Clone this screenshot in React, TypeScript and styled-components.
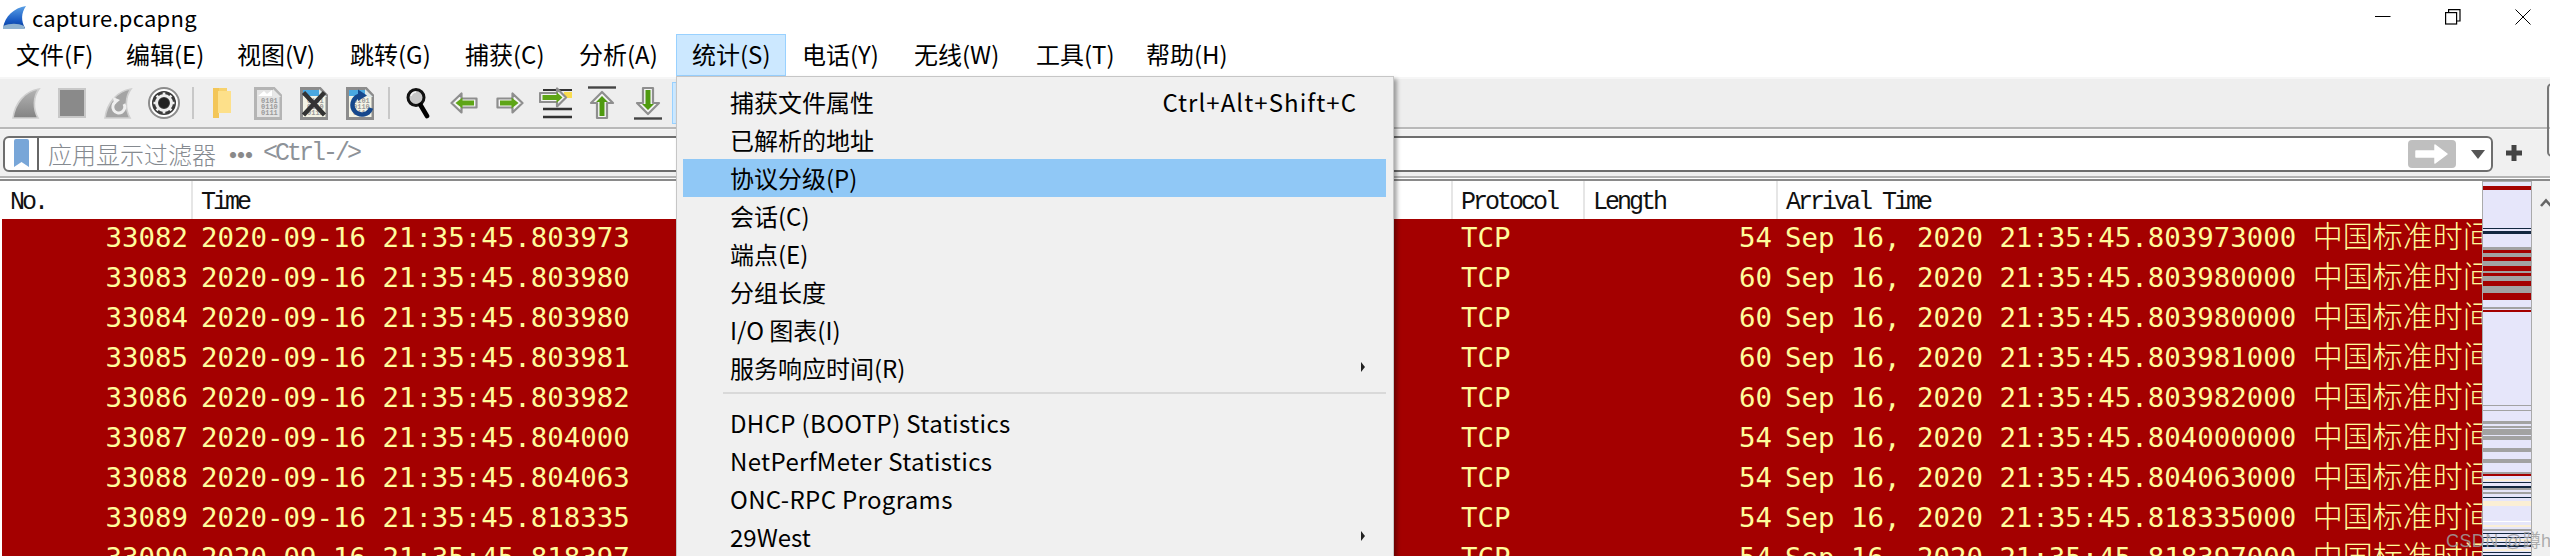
import React from "react";
import styled, { createGlobalStyle } from "styled-components";

const Global = createGlobalStyle`
  html, body { margin: 0; padding: 0; background: #fff; overflow: hidden; }
  #root { width: 2550px; height: 556px; }
`;

const UI = `"Noto Sans CJK SC", "Noto Sans", sans-serif`;

const Window = styled.div`
  position: relative;
  width: 2550px;
  height: 556px;
  overflow: hidden;
  display: flex;
  flex-direction: column;
  font-family: ${UI};
  color: #000;
`;

const TitleBar = styled.div`
  height: 34px;
  flex: none;
  display: flex;
  align-items: center;
  padding: 0 19px 0 2px;
  background: #fff;
`;
const TitleText = styled.span`
  margin-left: 5px;
  font-size: 22px;
  line-height: 34px;
  letter-spacing: 0.25px;
`;
const WindowControls = styled.div`
  margin-left: auto;
  display: flex;
  align-items: center;
  gap: 54px;
`;

const MenuBar = styled.div`
  height: 43px;
  flex: none;
  display: flex;
  background: #fff;
`;
const MenuTitle = styled.div<{ $active?: boolean; $w: number }>`
  width: ${(p) => p.$w}px;
  height: 42px;
  flex: none;
  box-sizing: border-box;
  padding: 0 0 4px 15px;
  display: flex;
  align-items: center;
  font-size: 24px;
  white-space: nowrap;
  border: 1px solid ${(p) => (p.$active ? "#99d1ff" : "transparent")};
  background: ${(p) => (p.$active ? "#cce8ff" : "transparent")};
`;

const Toolbar = styled.div`
  height: 48px;
  flex: none;
  display: flex;
  align-items: center;
  padding-left: 3px;
  background: #eeeeee;
  border-top: 2px solid #f6f6f6;
  border-bottom: 2px solid #b9b9b9;
`;
const ToolSlot = styled.div`
  width: 46px;
  height: 42px;
  display: flex;
  align-items: center;
  justify-content: center;
  flex: none;
`;
const ToolSep = styled.div`
  width: 2px;
  height: 32px;
  margin: 0 5px;
  flex: none;
  background: #c8c8c8;
`;
const HoverTool = styled.div`
  width: 46px;
  height: 42px;
  flex: none;
  box-sizing: border-box;
  margin-left: 1px;
  background: #cce8ff;
  border: 1px solid #99d1ff;
`;
const RightEdgeFrame = styled.div`
  position: absolute;
  left: 2547px;
  top: 83px;
  width: 10px;
  height: 74px;
  box-sizing: border-box;
  border: 2px solid #777;
  border-radius: 6px;
`;

const FilterBar = styled.div`
  height: 46px;
  flex: none;
  display: flex;
  align-items: center;
  padding: 0 0 0 3px;
  background: #f0f0f0;
  border-top: 1px solid #f6f6f6;
  border-bottom: 2px solid #b4b4b4;
`;
const FilterInput = styled.div`
  width: 2490px;
  height: 36px;
  flex: none;
  box-sizing: border-box;
  margin-top: 1px;
  display: flex;
  align-items: center;
  background: #fff;
  border: 2px solid #6e6e6e;
  border-radius: 6px;
  padding-left: 8px;
`;
const BookmarkDivider = styled.div`
  width: 2px;
  height: 32px;
  margin-left: 7px;
  flex: none;
  background: #666;
`;
const Placeholder = styled.span`
  margin-left: 9px;
  font-size: 24px;
  font-weight: 300;
  color: #858a90;
  white-space: nowrap;
  display: flex;
  align-items: center;
`;
const PlaceholderDots = styled.span`
  margin-left: 5px;
  font-size: 24px;
  font-weight: 700;
  letter-spacing: -16px;
  color: #8a8a8a;
`;
const PlaceholderHint = styled.span`
  margin-left: 18px;
  font-family: "Liberation Mono", monospace;
  font-size: 25px;
  letter-spacing: -3px;
  color: #8d9298;
`;
const ApplyButton = styled.div`
  margin-left: auto;
  width: 48px;
  height: 28px;
  flex: none;
  display: flex;
  align-items: center;
  justify-content: center;
  background: #bfbfbf;
  border-radius: 4px;
`;
const DropArrow = styled.div`
  width: 0;
  height: 0;
  flex: none;
  margin: 2px 6px 0 15px;
  border-left: 7px solid transparent;
  border-right: 7px solid transparent;
  border-top: 9px solid #555;
`;
const PlusButton = styled.div`
  margin-left: 13px;
  flex: none;
  display: flex;
`;

const Spacer = styled.div`
  height: 1px;
  flex: none;
  background: #fff;
`;
const PacketArea = styled.div`
  flex: 1;
  min-height: 0;
  display: flex;
  border-top: 2px solid #8a8a8a;
`;
const PacketTable = styled.div`
  flex: 1;
  min-width: 0;
  overflow: hidden;
  background: #fff;
  padding-left: 2px;
`;
const columns = `191px 1260px 132px 193px 1fr`;
const HeaderRow = styled.div`
  height: 38px;
  display: grid;
  grid-template-columns: ${columns};
`;
const HeaderCell = styled.div`
  padding-left: 8px;
  box-sizing: border-box;
  height: 38px;
  overflow: hidden;
  font-family: "Liberation Mono", monospace;
  font-size: 25px;
  letter-spacing: -3px;
  line-height: 44px;
  color: #111;
  border-right: 2px solid #e6e6e6;
  white-space: nowrap;
  &:last-child { border-right: none; }
`;
const PacketRow = styled.div`
  height: 40px;
  display: grid;
  grid-template-columns: ${columns};
  background: #a40000;
  color: #fffc9c;
  font-family: "DejaVu Sans Mono", monospace;
  font-size: 27.4px;
  line-height: 38px;
  white-space: pre;
`;
const NumCell = styled.div<{ $pad: number }>`
  text-align: right;
  padding-right: ${(p) => p.$pad}px;
`;
const TextCell = styled.div<{ $pad: number }>`
  padding-left: ${(p) => p.$pad}px;
  overflow: hidden;
`;
const Zone = styled.span`
  font-family: "Noto Sans CJK SC", sans-serif;
  font-size: 30px;
  font-weight: 300;
  line-height: 0;
`;

const Minimap = styled.svg`
  width: 50px;
  height: 376px;
  flex: none;
  display: block;
`;
const Scrollbar = styled.div`
  width: 18px;
  flex: none;
  background: #f0f0f0;
  padding: 8px 0 0 8px;
  box-sizing: border-box;
  overflow: hidden;
`;

const StatsMenu = styled.div`
  position: absolute;
  left: 676px;
  top: 76px;
  width: 718px;
  height: 490px;
  box-sizing: border-box;
  padding: 6px 7px 0 6px;
  background: #f0f0f0;
  border: 1px solid #c6c6c6;
  box-shadow: 3px 3px 4px rgba(0, 0, 0, 0.35);
`;
const MenuItem = styled.div<{ $active?: boolean; $latin?: boolean }>`
  height: 38px;
  box-sizing: border-box;
  display: flex;
  align-items: center;
  padding: 0 29px 2px 47px;
  font-size: 24px;
  white-space: nowrap;
  letter-spacing: ${(p) => (p.$latin ? "0.35px" : "0")};
  background: ${(p) => (p.$active ? "#90c8f6" : "transparent")};
`;
const Shortcut = styled.span`
  margin-left: auto;
  letter-spacing: 1.05px;
`;
const SubArrow = styled.div`
  margin-left: auto;
  margin-right: -8px;
  width: 0;
  height: 0;
  border-top: 5px solid transparent;
  border-bottom: 5px solid transparent;
  border-left: 4px solid #222;
`;
const MenuSeparator = styled.div`
  height: 2px;
  margin: 5px 0 10px 40px;
  background: #d9d9d9;
`;

const Watermark = styled.div`
  position: absolute;
  left: 2446px;
  top: 526px;
  font-family: "Liberation Sans", "Noto Sans CJK SC", sans-serif;
  font-size: 18px;
  letter-spacing: 0.4px;
  color: rgba(160, 160, 160, 0.85);
  white-space: nowrap;
`;

/* ---------- drawings ---------- */

const finPath = "M28 2 C14 4 4 16 2 31 L27 31 C22 22 22 10 28 2 Z";

const Logo = () => (
  <svg width="25" height="25" viewBox="0 0 25 25">
    <defs>
      <linearGradient id="logoG" x1="0" y1="0" x2="0" y2="1">
        <stop offset="0" stopColor="#5aa0e6" />
        <stop offset="0.7" stopColor="#1556c0" />
        <stop offset="1" stopColor="#0c3f9c" />
      </linearGradient>
    </defs>
    <path d="M24 1 C12 3 3 11 1 23 L23 23 C19 16 19 8 24 1 Z" fill="url(#logoG)" />
    <path d="M1 21 C8 18 16 18 22 21 L23 24 L1 24 Z" fill="#8fb2d0" />
  </svg>
);

const Minimize = () => (
  <svg width="16" height="16" viewBox="0 0 16 16"><path d="M0 7.5H15.5" stroke="#000" strokeWidth="1" /></svg>
);
const Restore = () => (
  <svg width="16" height="16" viewBox="0 0 16 16" fill="none" stroke="#000" strokeWidth="1.2">
    <rect x="0.6" y="3.6" width="11" height="11.4" />
    <path d="M3.6 3.5V0.6H15V12H11.6" />
  </svg>
);
const CloseX = () => (
  <svg width="16" height="16" viewBox="0 0 16 16"><path d="M0.5 0.5L15.5 15.5M15.5 0.5L0.5 15.5" stroke="#000" strokeWidth="1" /></svg>
);

const FinIcon = () => (
  <svg width="32" height="33" viewBox="0 0 30 33">
    <defs>
      <linearGradient id="finG" x1="0" y1="0" x2="0" y2="1">
        <stop offset="0" stopColor="#b4b4b4" />
        <stop offset="1" stopColor="#838383" />
      </linearGradient>
    </defs>
    <path d={finPath} fill="url(#finG)" stroke="#cfcfcf" strokeWidth="1.6" />
  </svg>
);
const StopIcon = () => (
  <svg width="28" height="30" viewBox="0 0 28 30">
    <rect x="1" y="1" width="26" height="28" fill="#8a8a8a" stroke="#c8c8c8" strokeWidth="2" />
  </svg>
);
const RestartIcon = () => (
  <svg width="32" height="33" viewBox="0 0 30 33">
    <path d={finPath} fill="#a4a4a4" stroke="#cfcfcf" strokeWidth="1.6" />
    <path d="M21 17 A6 6 0 1 1 12.5 15" fill="none" stroke="#efefef" strokeWidth="3" />
    <path d="M10 10 L17 13 L11 18 Z" fill="#efefef" />
  </svg>
);
const GearIcon = () => (
  <svg width="32" height="32" viewBox="0 0 32 32">
    <circle cx="16" cy="16" r="15" fill="#fff" stroke="#8c8c8c" strokeWidth="2" />
    <circle cx="16" cy="16" r="12" fill="#3a3a3a" />
    <circle cx="16" cy="16" r="7.5" fill="none" stroke="#eee" strokeWidth="3" />
    <g stroke="#eee" strokeWidth="2.6">
      <path d="M16 5.5V9M16 23V26.5M5.5 16H9M23 16H26.5M8.6 8.6L11 11M21 21L23.4 23.4M23.4 8.6L21 11M11 21L8.6 23.4" />
    </g>
    <circle cx="16" cy="16" r="5" fill="#222" />
  </svg>
);
const FolderIcon = () => (
  <svg width="20" height="34" viewBox="0 0 20 34">
    <path d="M1 2H15V5H19V27H7L1 32Z" fill="#f7d26d" />
    <path d="M1 2H7V32L1 32Z" fill="#f3c658" />
    <path d="M6 5H19V27H6Z" fill="#fde08a" />
  </svg>
);

const DocBase = ({ frame, bg, top }: { frame: string; bg: string; top?: boolean }) => (
  <>
    <path d="M1.5 1.5H20L27 9V31.5H1.5Z" fill={bg} stroke={frame} strokeWidth="3" />
    {top && <path d="M3 3H19V9H3Z" fill="#4aa8e0" />}
    <path d="M19 2V10H27Z" fill={top ? "#dfe9e9" : "#e8e8e8"} />
  </>
);
const BinLines = ({ color }: { color: string }) => (
  <g fontFamily="Liberation Mono, monospace" fontSize="7" fontWeight="700" fill={color}>
    <text x="7" y="16">0101</text>
    <text x="7" y="22">0110</text>
    <text x="7" y="28">0111</text>
  </g>
);
const FileIcon = () => (
  <svg width="28" height="33" viewBox="0 0 28 33">
    <DocBase frame="#b4b4b4" bg="#e4e4e4" />
    <path d="M4 9 L10 4 L13 7 L18 3 V9 Z" fill="#fff" />
    <BinLines color="#9a9a9a" />
  </svg>
);
const CloseFileIcon = () => (
  <svg width="28" height="33" viewBox="0 0 28 33">
    <DocBase frame="#8c8c8c" bg="#f4f4e6" top />
    <BinLines color="#9a9a9a" />
    <path d="M3.5 5.5L24.5 28M24.5 5.5L3.5 28" stroke="#333" strokeWidth="4.5" />
  </svg>
);
const ReloadFileIcon = () => (
  <svg width="28" height="33" viewBox="0 0 28 33">
    <DocBase frame="#8c8c8c" bg="#f4f4e6" top />
    <BinLines color="#9a9a9a" />
    <path d="M25 21 A9.5 9.5 0 1 1 13 9" fill="none" stroke="#16488c" strokeWidth="4.5" />
    <path d="M12 2.5 L21 8.5 L12 14 Z" fill="#16488c" />
  </svg>
);
const SearchIcon = () => (
  <svg width="24" height="32" viewBox="0 0 24 32">
    <circle cx="10" cy="10.5" r="8" fill="#c8c8c8" stroke="#111" strokeWidth="3" />
    <path d="M5 9 A5.5 5.5 0 0 1 10 5" fill="none" stroke="#f4f4f4" strokeWidth="1.6" />
    <path d="M14.5 18 L21 29" stroke="#000" strokeWidth="4.6" strokeLinecap="round" />
  </svg>
);

const arrowOuter = { fill: "#f4f4f4", stroke: "#8e8e8e", strokeWidth: 2.2, strokeLinejoin: "round" as const };

const LeftIcon = () => (
  <svg width="28" height="22" viewBox="0 0 28 22">
    <path d="M1.5 11L11.5 1.5V6.5H26.5V15.5H11.5V20.5Z" {...arrowOuter} />
    <path d="M5.5 11L12.5 5.5V8.5H24V13.5H12.5V16.5Z" fill="#5ea516" />
  </svg>
);
const RightIcon = () => (
  <svg width="28" height="22" viewBox="0 0 28 22">
    <path d="M26.5 11L16.5 1.5V6.5H1.5V15.5H16.5V20.5Z" {...arrowOuter} />
    <path d="M22.5 11L15.5 5.5V8.5H4V13.5H15.5V16.5Z" fill="#5ea516" />
  </svg>
);
const GotoIcon = () => (
  <svg width="34" height="32" viewBox="0 0 34 32">
    <path d="M4 3H33M4 9H33" stroke="#333" strokeWidth="2" />
    <rect x="25" y="5" width="8" height="6" fill="#f9dc50" />
    <path d="M4 22H33M4 30H33" stroke="#333" strokeWidth="2.4" />
    <path d="M27 10.5L18 1.5V6H1V15H18V19.5Z" {...arrowOuter} />
    <path d="M23.5 10.5L17.5 5V8H3.5V13H17.5V16Z" fill="#5ea516" />
  </svg>
);
const UpIcon = () => (
  <svg width="28" height="34" viewBox="0 0 28 34">
    <path d="M0 1.5H28" stroke="#444" strokeWidth="2.4" />
    <path d="M14 6L25 17H19V32H9V17H3Z" {...arrowOuter} />
    <path d="M14 10L20 16H16.5V30H11.5V16H8Z" fill="#4f9a10" />
  </svg>
);
const DownIcon = () => (
  <svg width="28" height="34" viewBox="0 0 28 34">
    <path d="M0 32.5H28" stroke="#444" strokeWidth="2.4" />
    <path d="M14 28L25 17H19V2H9V17H3Z" {...arrowOuter} />
    <path d="M14 24L20 18H16.5V4H11.5V18H8Z" fill="#4f9a10" />
  </svg>
);
const Bookmark = () => (
  <svg width="17" height="29" viewBox="0 0 17 29">
    <path d="M1 2Q1 0 3 0H14Q16 0 16 2V28L8.5 23L1 28Z" fill="#78a6d8" />
  </svg>
);
const ApplyArrow = () => (
  <svg width="34" height="22" viewBox="0 0 34 22">
    <path d="M1 8H20V2L32 11L20 20V14H1Z" fill="#fff" stroke="#fff" strokeLinejoin="round" strokeWidth="1.5" />
  </svg>
);
const Plus = () => (
  <svg width="16" height="16" viewBox="0 0 16 16"><path d="M8 0V16M0 8H16" stroke="#444" strokeWidth="5" /></svg>
);
const Chevron = () => (
  <svg width="12" height="10" viewBox="0 0 12 10"><path d="M1 8L6 2.5L11 8" fill="none" stroke="#666" strokeWidth="2.6" /></svg>
);

const L = "#e6e6fa";
const G = "#a2a2a2";
const R = "#a40000";
const D = "#12273f";
const C = "#fbefd5";
const bands: [number, number, string][] = [
  [5, 4, R], [47, 1, D], [50, 3, D], [66, 3, G], [69, 3, R], [72, 4, G], [76, 4, R],
  [80, 5, G], [85, 5, R], [90, 2, G], [92, 3, R], [95, 5, G], [100, 5, R], [105, 7, G],
  [112, 7, R], [126, 2, G], [129, 2, R], [224, 1, G], [229, 1, G], [240, 3, G], [245, 2, G],
  [248, 6, G], [255, 4, G], [267, 4, G], [278, 4, G], [291, 2, G], [293, 2, R],
  [298, 2, C], [301, 1, D], [305, 2, D], [307, 2, G], [311, 2, G], [316, 1, D],
  [320, 5, C], [340, 1, "#fff"], [344, 2, C], [348, 2, G], [352, 1, D], [356, 1, D],
  [358, 2, C], [361, 1, D], [364, 2, D], [368, 2, C], [371, 1, D], [374, 2, D],
];

const MinimapChart = () => (
  <Minimap viewBox="0 0 50 376">
    <rect x="0" y="0" width="50" height="376" fill={L} />
    {bands.map(([y, h, c]) => (
      <rect key={y} x="1" y={y} width="48" height={h} fill={c} />
    ))}
    <rect x="0.5" y="0.5" width="49" height="376" fill="none" stroke="#aaaaaa" />
  </Minimap>
);

/* ---------- data ---------- */

const menus: [string, number][] = [
  ["文件(F)", 110], ["编辑(E)", 111], ["视图(V)", 113], ["跳转(G)", 115], ["捕获(C)", 114], ["分析(A)", 113],
  ["统计(S)", 110], ["电话(Y)", 112], ["无线(W)", 122], ["工具(T)", 110], ["帮助(H)", 110],
];

const packets: [number, string, number][] = [
  [33082, "803973", 54], [33083, "803980", 60], [33084, "803980", 60],
  [33085, "803981", 60], [33086, "803982", 60], [33087, "804000", 54],
  [33088, "804063", 54], [33089, "818335", 54], [33090, "818397", 54],
];

export default function App() {
  return (
    <Window>
      <Global />
      <TitleBar>
        <Logo />
        <TitleText>capture.pcapng</TitleText>
        <WindowControls>
          <Minimize />
          <Restore />
          <CloseX />
        </WindowControls>
      </TitleBar>
      <MenuBar>
        {menus.map(([m, w]) => (
          <MenuTitle key={m} $w={w} $active={m === "统计(S)"}>{m}</MenuTitle>
        ))}
      </MenuBar>
      <Toolbar>
        <ToolSlot><FinIcon /></ToolSlot>
        <ToolSlot><StopIcon /></ToolSlot>
        <ToolSlot><RestartIcon /></ToolSlot>
        <ToolSlot><GearIcon /></ToolSlot>
        <ToolSep />
        <ToolSlot><FolderIcon /></ToolSlot>
        <ToolSlot><FileIcon /></ToolSlot>
        <ToolSlot><CloseFileIcon /></ToolSlot>
        <ToolSlot><ReloadFileIcon /></ToolSlot>
        <ToolSep />
        <ToolSlot><SearchIcon /></ToolSlot>
        <ToolSlot><LeftIcon /></ToolSlot>
        <ToolSlot><RightIcon /></ToolSlot>
        <ToolSlot><GotoIcon /></ToolSlot>
        <ToolSlot><UpIcon /></ToolSlot>
        <ToolSlot><DownIcon /></ToolSlot>
        <HoverTool />
      </Toolbar>
      <FilterBar>
        <FilterInput>
          <Bookmark />
          <BookmarkDivider />
          <Placeholder>
            应用显示过滤器
            <PlaceholderDots>···</PlaceholderDots>
            <PlaceholderHint>&lt;Ctrl-/&gt;</PlaceholderHint>
          </Placeholder>
          <ApplyButton><ApplyArrow /></ApplyButton>
          <DropArrow />
        </FilterInput>
        <PlusButton><Plus /></PlusButton>
      </FilterBar>
      <Spacer />
      <PacketArea>
        <PacketTable>
          <HeaderRow>
            <HeaderCell>No.</HeaderCell>
            <HeaderCell>Time</HeaderCell>
            <HeaderCell>Protocol</HeaderCell>
            <HeaderCell>Length</HeaderCell>
            <HeaderCell>Arrival Time</HeaderCell>
          </HeaderRow>
          {packets.map(([no, micro, len]) => (
            <PacketRow key={no}>
              <NumCell $pad={5}>{no}</NumCell>
              <TextCell $pad={8}>{`2020-09-16 21:35:45.${micro}`}</TextCell>
              <TextCell $pad={8}>TCP</TextCell>
              <NumCell $pad={6}>{len}</NumCell>
              <TextCell $pad={7}>
                {`Sep 16, 2020 21:35:45.${micro}000 `}<Zone>中国标准时间</Zone>
              </TextCell>
            </PacketRow>
          ))}
        </PacketTable>
        <MinimapChart />
        <Scrollbar><Chevron /></Scrollbar>
      </PacketArea>
      <RightEdgeFrame />
      <StatsMenu>
        <MenuItem>捕获文件属性<Shortcut>Ctrl+Alt+Shift+C</Shortcut></MenuItem>
        <MenuItem>已解析的地址</MenuItem>
        <MenuItem $active>协议分级(P)</MenuItem>
        <MenuItem>会话(C)</MenuItem>
        <MenuItem>端点(E)</MenuItem>
        <MenuItem>分组长度</MenuItem>
        <MenuItem>I/O 图表(I)</MenuItem>
        <MenuItem>服务响应时间(R)<SubArrow /></MenuItem>
        <MenuSeparator />
        <MenuItem $latin>DHCP (BOOTP) Statistics</MenuItem>
        <MenuItem $latin>NetPerfMeter Statistics</MenuItem>
        <MenuItem $latin>ONC-RPC Programs</MenuItem>
        <MenuItem>29West<SubArrow /></MenuItem>
      </StatsMenu>
      <Watermark>CSDN @蹲hehy</Watermark>
    </Window>
  );
}
